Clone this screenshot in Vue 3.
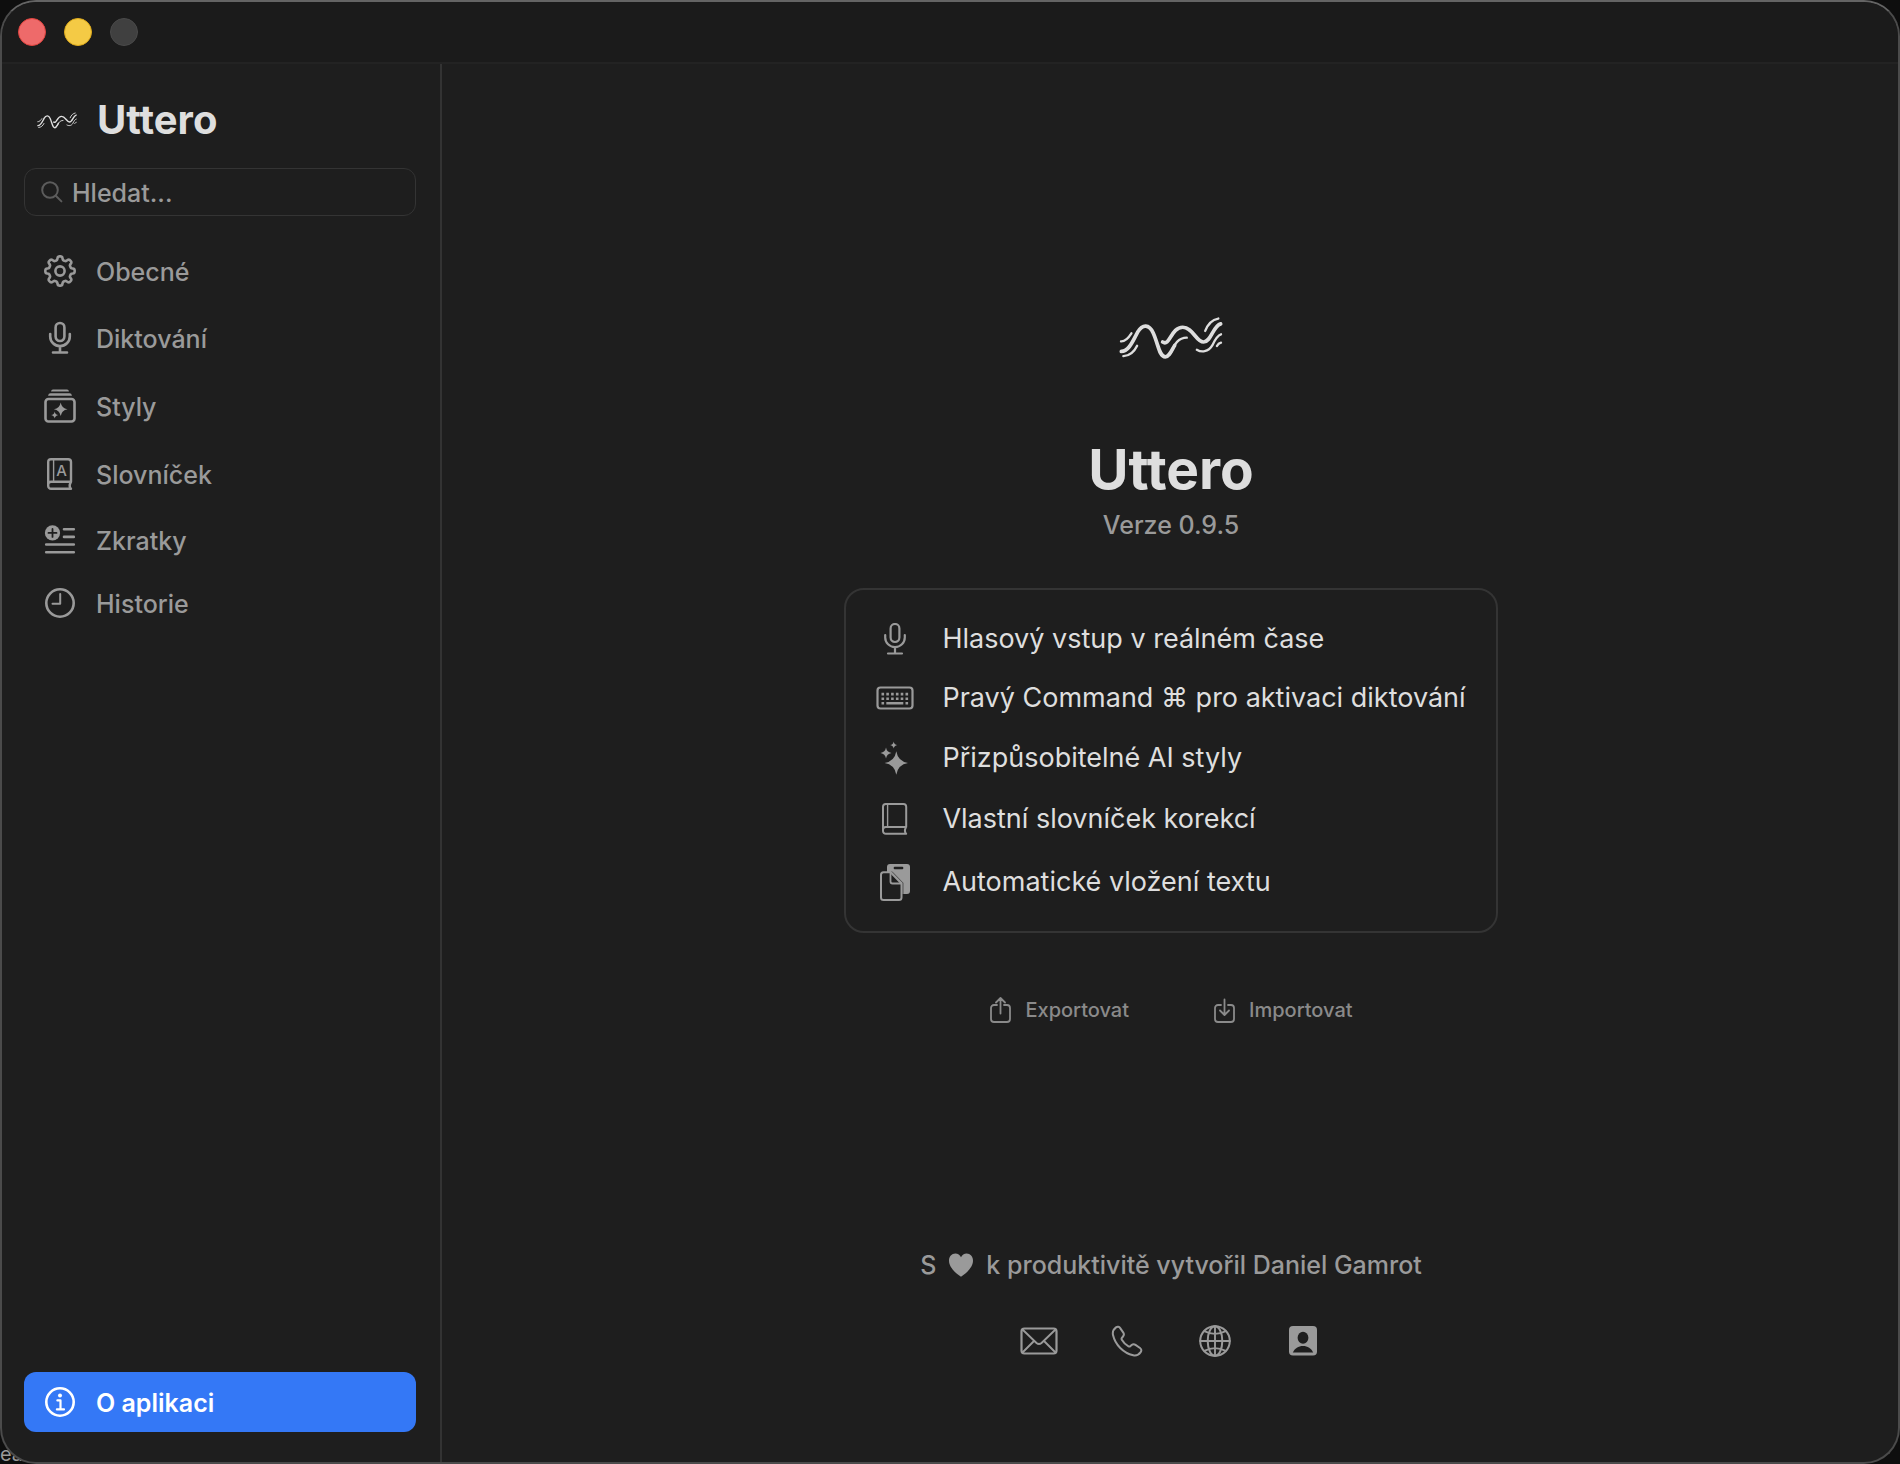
<template>
  <div class="desktop">
    <span class="behind">eac</span>
    <div class="window">
      <header class="titlebar">
        <button class="light close" type="button" aria-label="Zavřít"></button>
        <button class="light minimize" type="button" aria-label="Minimalizovat"></button>
        <button class="light zoom" type="button" aria-label="Zvětšit" disabled></button>
      </header>

      <div class="body">
        <aside class="sidebar">
          <div class="brand">
            <svg class="brand-logo" viewBox="180 108 310 130" v-html="logo"></svg>
            <span class="brand-name">Uttero</span>
          </div>

          <label class="search">
            <svg class="search-icon" width="22" height="22" viewBox="0 0 22 22">
              <circle cx="9" cy="9" r="7.8" />
              <path d="M14.8 14.8L20.4 20.4" />
            </svg>
            <input v-model="query" type="text" placeholder="Hledat..." aria-label="Hledat" />
          </label>

          <nav class="nav">
            <button
              v-for="item in navItems"
              :key="item.icon"
              class="nav-item"
              :class="{ active: current === item.icon }"
              type="button"
              @click="current = item.icon"
            >
              <span class="nav-icon">
                <svg
                  :width="icons[item.icon].w"
                  :height="icons[item.icon].h"
                  :viewBox="`0 0 ${icons[item.icon].w} ${icons[item.icon].h}`"
                  v-html="icons[item.icon].body"
                ></svg>
              </span>
              <span class="nav-label">{{ item.label }}</span>
            </button>
          </nav>
        </aside>

        <main class="main">
          <svg class="hero-logo" viewBox="180 108 310 130" v-html="logo"></svg>
          <h1 class="hero-title">Uttero</h1>
          <p class="version">Verze 0.9.5</p>

          <ul class="card">
            <li v-for="feature in features" :key="feature.icon" class="feature">
              <span class="feature-icon">
                <svg
                  :width="icons[feature.icon].w"
                  :height="icons[feature.icon].h"
                  :viewBox="`0 0 ${icons[feature.icon].w} ${icons[feature.icon].h}`"
                  v-html="icons[feature.icon].body"
                ></svg>
              </span>
              <span>{{ feature.label }}</span>
            </li>
          </ul>

          <div class="actions">
            <button v-for="action in actions" :key="action.icon" class="action" type="button">
              <svg width="24" height="28" viewBox="0 0 24 28" v-html="icons[action.icon].body"></svg>
              <span>{{ action.label }}</span>
            </button>
          </div>

          <footer class="footer">
            <p class="credit">
              <span>S</span>
              <svg width="26" height="26" viewBox="0 0 26 26">
                <path
                  fill="currentColor"
                  d="M13 24.8C7.5 20.8 1 15.6 1 8.6C1 4.4 3.8 1.5 7.3 1.5C9.9 1.5 12 3 13 5.2C14 3 16.1 1.5 18.7 1.5C22.2 1.5 25 4.4 25 8.6C25 15.6 18.5 20.8 13 24.8Z"
                />
              </svg>
              <span>k produktivitě vytvořil Daniel Gamrot</span>
            </p>
            <div class="contacts">
              <a v-for="c in contacts" :key="c.icon" class="contact" :href="c.href" :aria-label="c.label">
                <svg
                  :width="icons[c.icon].w"
                  :height="icons[c.icon].h"
                  :viewBox="`0 0 ${icons[c.icon].w} ${icons[c.icon].h}`"
                  v-html="icons[c.icon].body"
                ></svg>
              </a>
            </div>
          </footer>
        </main>
      </div>
    </div>
  </div>
</template>

<script setup>
import { ref } from 'vue';

const query = ref('');
const current = ref('info');

const navItems = [
  { icon: 'gear', label: 'Obecné' },
  { icon: 'mic', label: 'Diktování' },
  { icon: 'styles', label: 'Styly' },
  { icon: 'dictionary', label: 'Slovníček' },
  { icon: 'shortcuts', label: 'Zkratky' },
  { icon: 'clock', label: 'Historie' },
  { icon: 'info', label: 'O aplikaci' }
];

const features = [
  { icon: 'micThin', label: 'Hlasový vstup v reálném čase' },
  { icon: 'keyboard', label: 'Pravý Command ⌘ pro aktivaci diktování' },
  { icon: 'sparkles', label: 'Přizpůsobitelné AI styly' },
  { icon: 'book', label: 'Vlastní slovníček korekcí' },
  { icon: 'clipboard', label: 'Automatické vložení textu' }
];

const actions = [
  { icon: 'export', label: 'Exportovat' },
  { icon: 'import', label: 'Importovat' }
];

const contacts = [
  { icon: 'mail', label: 'E-mail', href: '#mail' },
  { icon: 'phone', label: 'Telefon', href: '#phone' },
  { icon: 'globe', label: 'Web', href: '#web' },
  { icon: 'person', label: 'Kontakt', href: '#contact' }
];

// Eight-toothed gear outline with rounded teeth
const gearPath = (c, base, tooth) => {
  const points = [];
  for (let i = 0; i < 160; i++) {
    const a = (i / 160) * Math.PI * 2;
    const r = base + tooth * Math.tanh(2.2 * Math.cos(8 * a));
    points.push(`${(c + r * Math.cos(a)).toFixed(2)} ${(c + r * Math.sin(a)).toFixed(2)}`);
  }
  return `M${points.join('L')}Z`;
};

// Four-pointed star
const star = (x, y, r) => {
  const k = r * 0.14;
  return `M${x} ${y - r}Q${x + k} ${y - k} ${x + r} ${y}Q${x + k} ${y + k} ${x} ${y + r}Q${x - k} ${y + k} ${x - r} ${y}Q${x - k} ${y - k} ${x} ${y - r}Z`;
};

const line = (d, w = 2.6) =>
  `<path d="${d}" fill="none" stroke="currentColor" stroke-width="${w}" stroke-linecap="round" stroke-linejoin="round"/>`;
const solid = (d) => `<path d="${d}" fill="currentColor"/>`;

const logo = [
  line('M187 213C210 213 222 180 236 155C250 131 270 131 282 158C298 194 300 229 318 229C330 229 337 210 346 195', 11),
  line('M336 213C346 192 356 172 382 172', 7),
  line('M310 185C332 199 335 141 370 141C400 141 410 185 432 185C455 185 460 137 483 131', 11),
  line('M186 183C200 184 210 170 217 159', 7),
  line('M193 227C212 226 225 215 234 196', 7),
  line('M437 152C445 130 460 118 476 115', 7),
  line('M412 208C425 216 446 216 458 195C466 178 474 165 484 162', 7),
  line('M472 197C475 191 479 188 484 187', 7)
].join('');

const mic = (w) =>
  line('M12 2a4.4 4.4 0 0 1 4.4 4.4v9.2a4.4 4.4 0 0 1-8.8 0V6.4A4.4 4.4 0 0 1 12 2Z', w) +
  line('M2.2 13v2.5a9.8 9.6 0 0 0 19.6 0V13M12 25.2v6.2M5 31.5H19', w);

const keys = [6.5, 11.3, 16.1, 20.9, 25.7, 30.5]
  .flatMap((x) => [6.8, 11.4].map((y) => `M${x - 1} ${y}h2.6v2.6h-2.6Z`))
  .join('');

const icons = {
  gear: {
    w: 34,
    h: 34,
    body: line(gearPath(17, 12.9, 1.8)) + '<circle cx="17" cy="17" r="4.6" fill="none" stroke="currentColor" stroke-width="2.6"/>'
  },
  mic: { w: 24, h: 34, body: mic(2.6) },
  micThin: { w: 24, h: 32, body: `<g transform="translate(0 -1)">${mic(2.2)}</g>` },
  styles: {
    w: 34,
    h: 36,
    body:
      '<rect x="2.5" y="11" width="29" height="22.5" rx="3" fill="none" stroke="currentColor" stroke-width="2.6"/>' +
      solid('M8 3.6Q8.3 1.4 10 1.4H24Q25.700 1.4 26 3.6ZM5 7.700Q5.500 5.300 7.500 5.300H26.500Q28.500 5.300 29 7.700Z') +
      solid(star(17.7, 21.3, 6.8)) +
      solid(star(11.7, 27, 3.6))
  },
  dictionary: {
    w: 28,
    h: 34,
    body:
      line('M25 24.8V5a2.8 2.8 0 0 0-2.8-2.8H5A2.8 2.8 0 0 0 2.2 5V29A2.8 2.8 0 0 0 5 31.8H25C23.3 30 23.3 27.5 25 24.8H5A2.8 2.8 0 0 0 2.2 27.6', 2.4) +
      line('M7.6 3V24', 1.4) +
      '<text x="15.5" y="19" text-anchor="middle" font-family="Inter, sans-serif" font-size="15" font-weight="500" fill="currentColor">A</text>'
  },
  shortcuts: {
    w: 34,
    h: 31,
    body:
      '<circle cx="9.5" cy="8.9" r="7.6" fill="currentColor"/>' +
      '<path d="M9.5 4.9v8M5.5 8.9h8" stroke="#1e1e1e" stroke-width="1.8" stroke-linecap="round"/>' +
      line('M21 5.2H30.8M21 12.9H30.8M3.2 20.5H30.8M3.2 28.2H30.8')
  },
  clock: {
    w: 30,
    h: 30,
    body: '<circle cx="15" cy="15" r="13.7" fill="none" stroke="currentColor" stroke-width="2.6"/>' + line('M15.2 6V15.8H7.5', 2)
  },
  info: {
    w: 30,
    h: 30,
    body:
      '<circle cx="15" cy="15" r="13.7" fill="none" stroke="currentColor" stroke-width="2.6"/>' +
      '<circle cx="15" cy="8.4" r="2" fill="currentColor"/>' +
      line('M12.4 13.4H15.5V22.4M11.9 22.4H19', 2.2)
  },
  keyboard: {
    w: 38,
    h: 24,
    body:
      '<rect x="1.5" y="1.5" width="35" height="21" rx="3" fill="none" stroke="currentColor" stroke-width="2.2"/>' +
      solid(keys + 'M5.5 16h2.6v2.6h-2.6ZM29.5 16h2.6v2.6h-2.6ZM10.3 16h17v2.6h-17Z')
  },
  sparkles: { w: 30, h: 34, body: solid(star(16.3, 22, 11.7) + star(6, 12, 5.5) + star(13.7, 4, 3.6)) },
  book: {
    w: 28,
    h: 34,
    body:
      line('M25.2 25V4.8A2.8 2.8 0 0 0 22.4 2H4.8A2.8 2.8 0 0 0 2 4.8V29a2.8 2.8 0 0 0 2.8 2.8H25.2C23.6 30 23.6 27.5 25.2 25H4.8A2.8 2.8 0 0 0 2 27.8', 2) +
      line('M6.6 2.5V25', 1.4)
  },
  clipboard: {
    w: 32,
    h: 38,
    body:
      '<rect x="8" y="1" width="23" height="30" rx="3" fill="currentColor"/>' +
      '<rect x="14.7" y="3.7" width="9.6" height="2.6" rx="1" fill="#1e1e1e"/>' +
      '<path d="M11.5 9.3H4.5A2.5 2.5 0 0 0 2 11.8V34.5A2.5 2.5 0 0 0 4.5 37H20A2.5 2.5 0 0 0 22.5 34.5V20.5Z" fill="#1e1e1e" stroke="currentColor" stroke-width="2" stroke-linejoin="round"/>' +
      line('M11.5 9.5V18.5a2 2 0 0 0 2 2H22', 1.8) +
      '<path d="M12.8 8.4L24 19.9V31" fill="none" stroke="#1e1e1e" stroke-width="0.6"/>'
  },
  export: {
    body: line('M8 9H5a3 3 0 0 0-3 3v11a3 3 0 0 0 3 3h13a3 3 0 0 0 3-3V12a3 3 0 0 0-3-3h-3M11.5 17.5V2.2M7 6.5L11.5 2L16 6.5', 1.8)
  },
  import: {
    body: line('M8 9H5a3 3 0 0 0-3 3v11a3 3 0 0 0 3 3h13a3 3 0 0 0 3-3V12a3 3 0 0 0-3-3h-3M11.5 3.5V18.6M7 14.5L11.5 19L16 14.5', 1.8)
  },
  mail: {
    w: 38,
    h: 28,
    body:
      '<rect x="1.5" y="1.5" width="35" height="25" rx="3" fill="none" stroke="currentColor" stroke-width="2.2"/>' +
      line('M2.5 2.5L16.5 16Q19 18.2 21.5 16L35.5 2.5M2.5 25.5L14 14M35.5 25.5L24 14', 1.9)
  },
  phone: {
    w: 32,
    h: 32,
    body: line(
      'M5 2.4C6.5 1.3 8.2 1.7 9.2 3.1L12.3 7.6C13.2 8.9 13 10.3 12 11.5L10.9 12.8C10.4 13.5 10.4 14 10.8 14.7C12.3 17.3 14.9 19.9 17.5 21.3C18.2 21.7 18.7 21.7 19.3 21.2L20.6 20.1C21.8 19.1 23.2 19 24.5 19.9L29 23C30.4 24 30.8 25.6 29.7 27.1C27.9 29.6 25.2 30.9 22.2 30.2C12.4 28 4.2 19.8 2 10C1.4 7.1 2.6 4.2 5 2.4Z',
      2
    )
  },
  globe: {
    w: 32,
    h: 32,
    body:
      '<circle cx="16" cy="16" r="14.8" fill="none" stroke="currentColor" stroke-width="2"/>' +
      '<ellipse cx="16" cy="16" rx="7.3" ry="14.8" fill="none" stroke="currentColor" stroke-width="2"/>' +
      line('M16 1.2V30.8M1.2 16H30.8M5.3 6.2Q16 11.5 26.7 6.2M5.3 25.8Q16 20.5 26.7 25.8', 1.9)
  },
  person: {
    w: 28,
    h: 30,
    body:
      '<rect width="28" height="29.5" rx="4" fill="currentColor"/>' +
      '<ellipse cx="14" cy="11.8" rx="5.4" ry="6" fill="#1e1e1e"/>' +
      '<path d="M3.8 26.6C5.5 22.5 9.5 20 14 20S22.5 22.5 24.2 26.6Z" fill="#1e1e1e"/>'
  }
};
</script>

<style>
html,
body {
  background: #0e0e0e;
}
</style>

<style scoped>
.desktop {
  position: relative;
  display: flex;
  min-height: 100vh;
  overflow: hidden;
  background: #0e0e0e;
  color: #dedede;
  font-family: Inter, 'Liberation Sans', sans-serif;
}

/* text of the window underneath, visible past the rounded corner */
.behind {
  position: absolute;
  left: 0;
  bottom: 0;
  font-size: 20px;
  line-height: 20px;
  color: #9a9a9a;
}

.window {
  position: relative;
  flex: 1;
  display: flex;
  flex-direction: column;
  box-sizing: border-box;
  border: 2px solid #4b4b4b;
  border-top-color: #646464;
  border-radius: 36px;
  overflow: hidden;
  background: #1e1e1e;
}

button {
  font: inherit;
  color: inherit;
  background: none;
  border: none;
  padding: 0;
}

svg {
  display: block;
  flex-shrink: 0;
}

.titlebar {
  display: flex;
  align-items: center;
  gap: 18px;
  height: 60px;
  padding: 0 16px;
  background: #1b1b1b;
  border-bottom: 2px solid #232323;
}

.light {
  width: 28px;
  height: 28px;
  border-radius: 50%;
}

.close {
  background: #ee6a6a;
  border: 1px solid #e1443f;
}

.minimize {
  background: #f4ca45;
  border: 1px solid #deab1c;
}

.zoom {
  background: #404040;
  border: 1px solid #4a4a4a;
}

.body {
  flex: 1;
  display: flex;
}

.sidebar {
  display: flex;
  flex-direction: column;
  box-sizing: border-box;
  width: 440px;
  padding: 32px 24px 30px 22px;
  border-right: 2px solid #333333;
}

.brand {
  display: flex;
  align-items: center;
  gap: 20px;
  padding-left: 13px;
  height: 48px;
}

.brand-logo {
  width: 40px;
  height: 17px;
}

.brand-name {
  font-size: 40px;
  line-height: 48px;
  font-weight: 700;
}

.search {
  display: flex;
  align-items: center;
  gap: 9px;
  box-sizing: border-box;
  height: 48px;
  margin-top: 24px;
  padding: 0 16px;
  border: 1px solid #343434;
  border-radius: 12px;
}

.search-icon {
  fill: none;
  stroke: #5c5c5c;
  stroke-width: 2;
  stroke-linecap: round;
}

.search input {
  flex: 1;
  min-width: 0;
  padding: 2px 0 0;
  border: none;
  outline: none;
  background: none;
  color: #dedede;
  font-family: inherit;
  font-size: 25px;
  font-weight: 500;
  line-height: 28px;
}

.search input::placeholder {
  color: #9a9a9a;
  opacity: 1;
}

.nav {
  flex: 1;
  display: flex;
  flex-direction: column;
  gap: 3px;
  margin-top: 23px;
}

.nav-item {
  display: flex;
  align-items: center;
  gap: 18px;
  padding: 15px 18px;
  border-radius: 12px;
  color: #9a9a9a;
  font-size: 25px;
  font-weight: 500;
  line-height: 28px;
  text-align: left;
}

.nav-item:last-child {
  margin-top: auto;
}

.nav-item.active {
  background: #3478f6;
  color: #ffffff;
  font-weight: 600;
}

.nav-icon {
  display: flex;
  justify-content: center;
  width: 36px;
}

.nav-label {
  padding-top: 2px;
}

.main {
  flex: 1;
  display: flex;
  flex-direction: column;
  align-items: center;
  padding: 252px 24px 105px 26px;
}

.hero-logo {
  width: 104px;
  height: 44px;
}

.hero-title {
  margin: 77px 0 0;
  font-size: 55px;
  line-height: 64px;
  font-weight: 700;
}

.version {
  margin: 8px 0 0;
  font-size: 25px;
  font-weight: 500;
  line-height: 32px;
  color: #9a9a9a;
}

.card {
  display: flex;
  flex-direction: column;
  gap: 27px;
  margin: 47px 0 0;
  padding: 33px 30px 30px;
  border: 2px solid #343434;
  border-radius: 20px;
  list-style: none;
}

.feature {
  display: flex;
  align-items: center;
  gap: 28px;
  font-size: 27px;
  line-height: 32px;
}

.feature-icon {
  display: flex;
  justify-content: center;
  width: 38px;
  color: #9a9a9a;
}

.actions {
  display: flex;
  gap: 84px;
  margin-top: 63px;
}

.action {
  display: flex;
  align-items: center;
  gap: 12px;
  font-size: 20px;
  line-height: 28px;
  font-weight: 500;
  color: #8a8a8a;
}

.footer {
  display: flex;
  flex-direction: column;
  align-items: center;
  margin-top: auto;
  color: #9a9a9a;
}

.credit {
  display: flex;
  align-items: center;
  gap: 12px;
  margin: 0;
  font-size: 25px;
  font-weight: 500;
  line-height: 32px;
}

.contacts {
  display: flex;
  align-items: center;
  gap: 50px;
  margin-top: 44px;
}

.contact {
  display: flex;
  justify-content: center;
  width: 38px;
  color: inherit;
}
</style>
